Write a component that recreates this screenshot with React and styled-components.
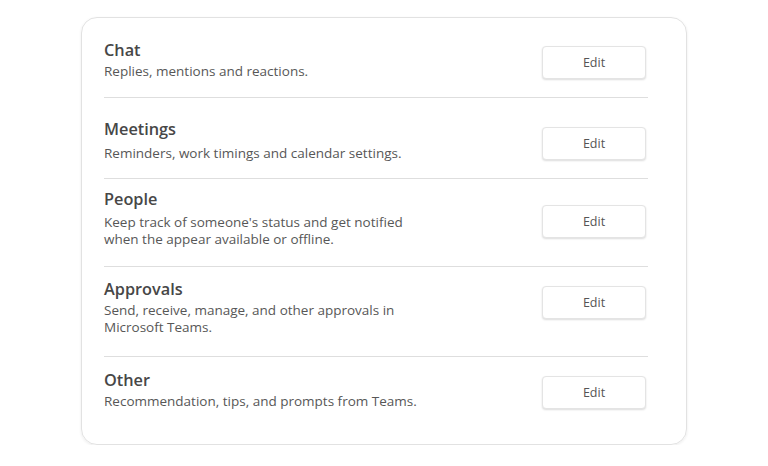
import React from 'react'
import styled, { createGlobalStyle } from 'styled-components'

const GlobalStyle = createGlobalStyle`
  body {
    margin: 0;
    background: #fff;
    font-family: "Open Sans", "Noto Sans", sans-serif;
  }
`

const Page = styled.div`
  display: flex;
  justify-content: center;
  padding-top: 17px;
`

const Card = styled.section`
  width: 606px;
  height: 428px;
  box-sizing: border-box;
  border: 1px solid #e2e2e2;
  border-radius: 16px;
  box-shadow: 0 1px 3px rgba(0, 0, 0, 0.08);
  padding: 0 38px 0 22px;
  display: flex;
  flex-direction: column;
`

const Row = styled.div`
  display: flex;
  justify-content: space-between;
  align-items: flex-start;
  height: ${({ h }) => h}px;
  flex-shrink: 0;
  box-sizing: border-box;
  padding-top: ${({ pt }) => pt}px;
  border-bottom: ${({ last }) => (last ? 'none' : '1px solid #dedede')};
`

const Text = styled.div`
  display: flex;
  flex-direction: column;
  gap: ${({ gap }) => gap}px;
`

const Title = styled.h3`
  margin: 0;
  font-size: 16.3px;
  line-height: 22px;
  font-weight: 600;
  color: #474747;
`

const Desc = styled.p`
  margin: 0;
  font-size: 13.5px;
  line-height: 17px;
  color: #575757;
  white-space: pre-line;
`

const EditButton = styled.button`
  width: 104px;
  height: 33px;
  margin-right: 2px;
  margin-top: ${({ mt }) => mt}px;
  background: #fff;
  border: 1px solid #e4e4e4;
  border-radius: 4px;
  box-shadow: 0 1px 2px rgba(0, 0, 0, 0.14);
  font-family: inherit;
  font-size: 12.5px;
  color: #555;
  cursor: pointer;
`

// mt is measured from the row's padded top
const sections = [
  { title: 'Chat', desc: 'Replies, mentions and reactions.', h: 80, pt: 21, gap: 2, mt: 7 },
  { title: 'Meetings', desc: 'Reminders, work timings and calendar settings.', h: 81, pt: 20, gap: 5, mt: 9 },
  {
    title: 'People',
    desc: "Keep track of someone's status and get notified\nwhen the appear available or offline.",
    h: 88,
    pt: 9,
    gap: 4,
    mt: 17,
  },
  {
    title: 'Approvals',
    desc: 'Send, receive, manage, and other approvals in\nMicrosoft Teams.',
    h: 90,
    pt: 11,
    gap: 2,
    mt: 8,
  },
  { title: 'Other', desc: 'Recommendation, tips, and prompts from Teams.', h: 87, pt: 12, gap: 2, mt: 7 },
]

export default function App () {
  return (
    <>
      <GlobalStyle />
      <Page>
        <Card>
          {sections.map((s, i) => (
            <Row key={s.title} h={s.h} pt={s.pt} last={i === sections.length - 1}>
              <Text gap={s.gap}>
                <Title>{s.title}</Title>
                <Desc>{s.desc}</Desc>
              </Text>
              <EditButton mt={s.mt}>Edit</EditButton>
            </Row>
          ))}
        </Card>
      </Page>
    </>
  )
}
